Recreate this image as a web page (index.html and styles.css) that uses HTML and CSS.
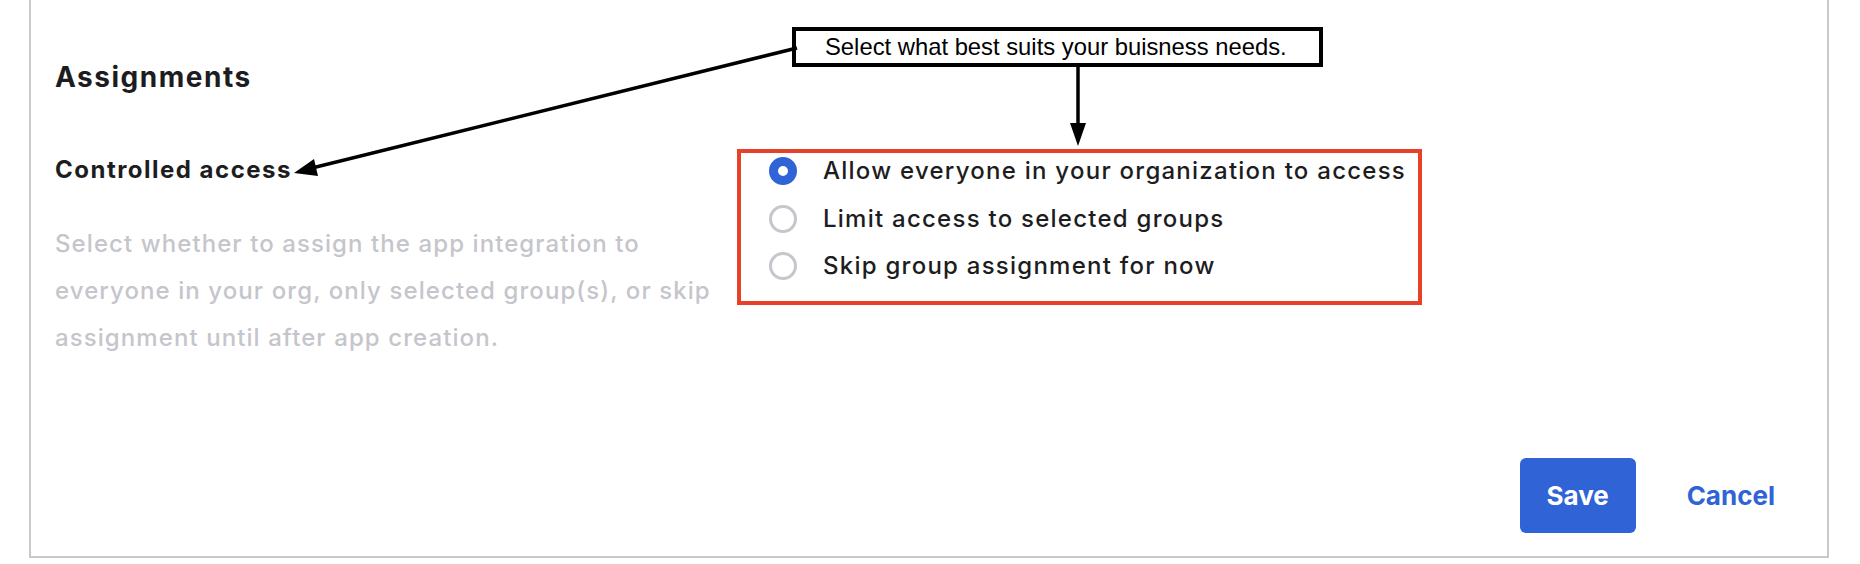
FILE: index.html
```html
<!DOCTYPE html>
<html lang="en">
<head>
<meta charset="utf-8">
<title>Assignments</title>
<link rel="stylesheet" href="styles.css">
</head>
<body>
<div class="card">
  <h2 class="title">Assignments</h2>
  <div class="row">
    <div class="left">
      <h3 class="subtitle">Controlled access</h3>
      <p class="desc">Select whether to assign the app integration to everyone in your org, only selected group(s), or skip assignment until after app creation.</p>
    </div>
    <div class="options">
      <label class="opt"><span class="radio checked"></span>Allow everyone in your organization to access</label>
      <label class="opt"><span class="radio"></span>Limit access to selected groups</label>
      <label class="opt"><span class="radio"></span>Skip group assignment for now</label>
    </div>
  </div>
  <div class="actions">
    <button class="save">Save</button>
    <a class="cancel">Cancel</a>
  </div>
</div>
<div class="callout">Select what best suits your buisness needs.</div>
<svg class="annot" width="1860" height="564" viewBox="0 0 1860 564">
  <line x1="797" y1="48" x2="312" y2="168" stroke="#000" stroke-width="3.5"/>
  <polygon points="294,173 314,159 318,176" fill="#000"/>
  <line x1="1078" y1="67" x2="1078" y2="126" stroke="#000" stroke-width="3.5"/>
  <polygon points="1078,146 1070,123 1086,123" fill="#000"/>
</svg>
</body>
</html>
```
FILE: styles.css
```css
html, body {
  margin: 0;
  padding: 0;
  background: #fff;
}
body {
  width: 1860px;
  height: 564px;
  position: relative;
  overflow: hidden;
  font-family: Inter, "Noto Sans", sans-serif;
  color: #1d1d21;
}
.card {
  box-sizing: border-box;
  margin-left: 29px;
  width: 1800px;
  height: 558px;
  border: 2px solid #c8c8ce;
  border-top: none;
  padding-left: 24px;
  display: flex;
  flex-direction: column;
}
.title {
  margin: 60px 0 0;
  font-size: 28px;
  line-height: 34px;
  font-weight: 700;
  letter-spacing: 0.054em;
}
.row {
  margin-top: 55px;
  display: flex;
  align-items: flex-start;
}
.left {
  width: 664px;
  padding-top: 6px;
}
.subtitle {
  margin: 0;
  font-size: 24px;
  line-height: 30px;
  font-weight: 700;
  letter-spacing: 0.062em;
}
.desc {
  margin: 35px 0 0;
  font-size: 24px;
  line-height: 47px;
  font-weight: 500;
  letter-spacing: 0.045em;
  color: #c5c5cc;
}
.options {
  box-sizing: border-box;
  width: 685px;
  margin-left: 18px;
  border: 4px solid #e8412a;
  padding: 2px 0 19px 28px;
  display: flex;
  flex-direction: column;
  gap: 15.5px;
}
.opt {
  display: flex;
  align-items: center;
  gap: 26px;
  font-size: 24px;
  line-height: 32px;
  font-weight: 500;
  letter-spacing: 0.052em;
}
.radio {
  box-sizing: border-box;
  width: 28px;
  height: 28px;
  border-radius: 50%;
  border: 3px solid #c6c6cc;
  flex: none;
}
.radio.checked {
  border: 9px solid #3063d6;
  background: #fff;
}
.actions {
  margin-top: auto;
  margin-bottom: 23px;
  display: flex;
  align-items: center;
  justify-content: flex-end;
  padding-right: 52px;
}
.save {
  box-sizing: border-box;
  width: 116px;
  height: 75px;
  border: none;
  border-radius: 6px;
  background: #3063d6;
  color: #fff;
  font-family: Inter, "Noto Sans", sans-serif;
  font-size: 26px;
  font-weight: 700;
}
.cancel {
  margin-left: 51px;
  font-size: 26px;
  font-weight: 700;
  color: #3063d6;
}
.callout {
  position: absolute;
  left: 792px;
  top: 27px;
  box-sizing: border-box;
  width: 531px;
  height: 40px;
  border: 4px solid #000;
  background: #fff;
  padding-left: 29px;
  font-family: "Liberation Sans", Arial, sans-serif;
  font-size: 23.8px;
  line-height: 32px;
  color: #000;
}
.annot {
  position: absolute;
  left: 0;
  top: 0;
  pointer-events: none;
}
```
